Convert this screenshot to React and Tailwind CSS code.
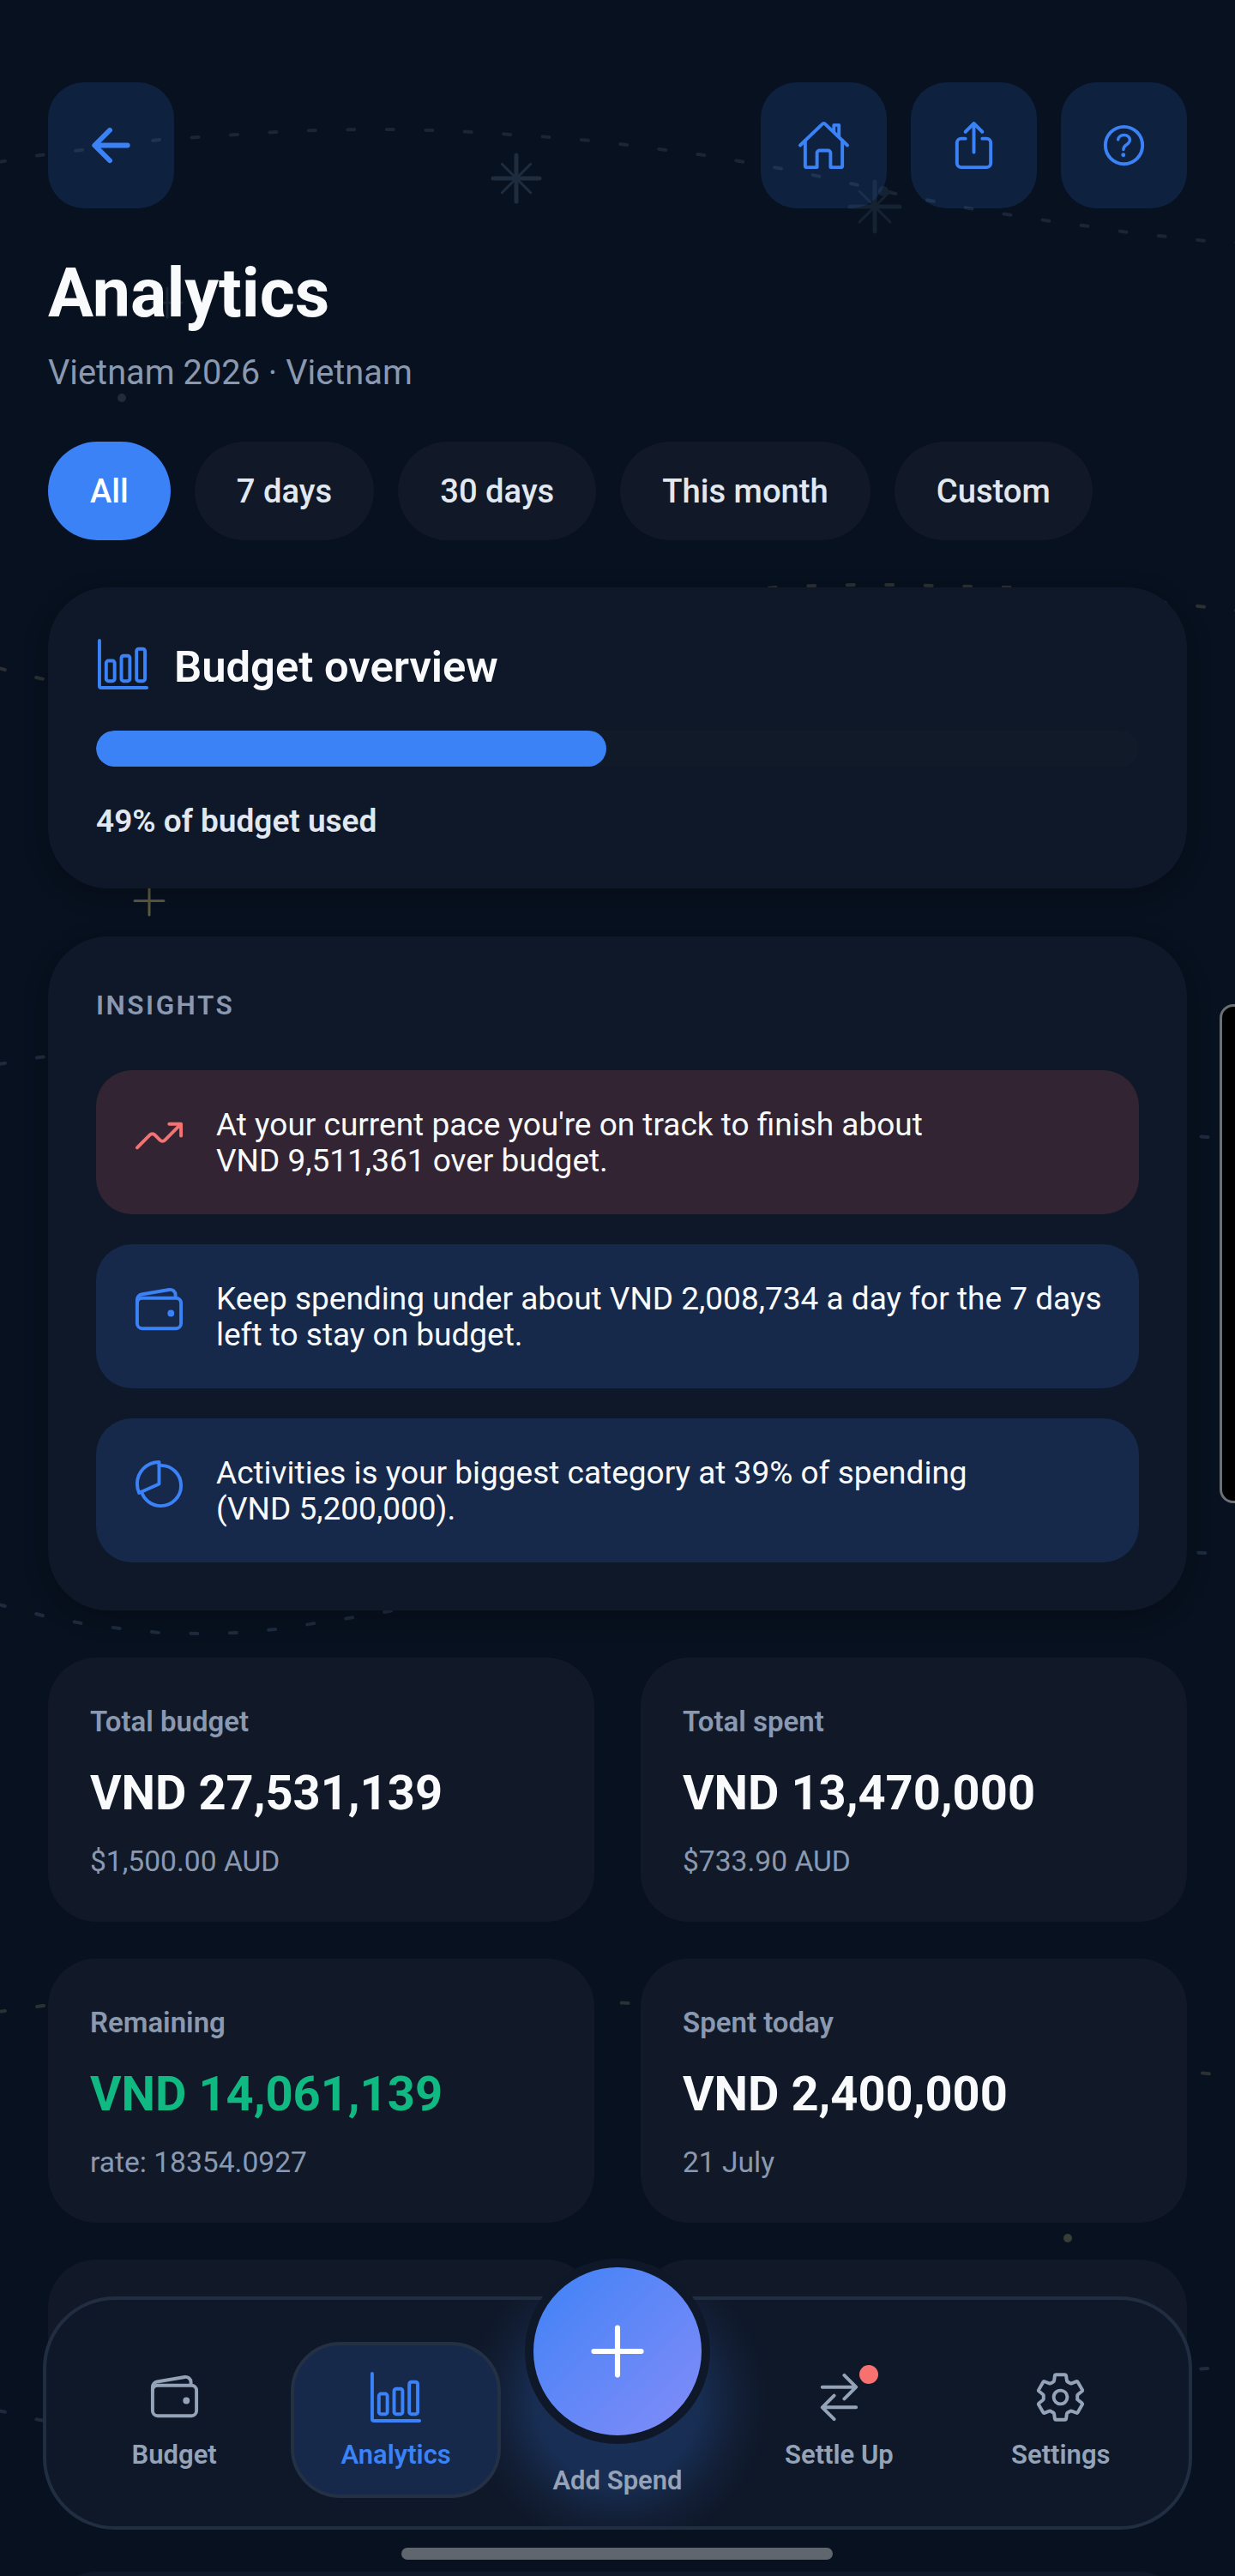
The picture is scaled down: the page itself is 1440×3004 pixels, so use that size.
import {
  IoAdd,
  IoArrowBack,
  IoBarChartOutline,
  IoHelpCircleOutline,
  IoHomeOutline,
  IoPieChartOutline,
  IoSettingsOutline,
  IoShareOutline,
  IoSwapHorizontalOutline,
  IoTrendingUpOutline,
  IoWalletOutline,
} from 'react-icons/io5'

const RANGES = ['All', '7 days', '30 days', 'This month', 'Custom']

const INSIGHTS = [
  {
    icon: IoTrendingUpOutline,
    tone: 'bg-[#322433]',
    iconColor: 'text-[#f87171]',
    text: "At your current pace you're on track to finish about VND\u00A09,511,361 over budget.",
  },
  {
    icon: IoWalletOutline,
    tone: 'bg-[#16294b]',
    iconColor: 'text-[#3b82f6]',
    text: 'Keep spending under about VND\u00A02,008,734 a day for the 7 days left to stay on budget.',
  },
  {
    icon: IoPieChartOutline,
    tone: 'bg-[#16294b]',
    iconColor: 'text-[#3b82f6]',
    text: 'Activities is your biggest category at 39% of spending (VND\u00A05,200,000).',
  },
]

const STATS = [
  { label: 'Total budget', value: 'VND 27,531,139', sub: '$1,500.00 AUD' },
  { label: 'Total spent', value: 'VND 13,470,000', sub: '$733.90 AUD' },
  { label: 'Remaining', value: 'VND 14,061,139', sub: 'rate: 18354.0927', good: true },
  { label: 'Spent today', value: 'VND 2,400,000', sub: '21 July' },
]

const WAVES = [
  { color: '#1a2636', points: '-2,189 46,181 95,175 140,169 185,163 230,160 275,157 321,154 367,152 413,151 459,151 505,152 551,154 597,157 642,160 688,164 731,169 777,175 822,181 868,189 913,197 957,206 1001,216 1045,226 1090,235 1135,244 1180,251 1225,258 1270,264 1315,271 1360,276 1407,281 1442,283' },
  { color: '#2b3032', points: '-2,779 46,791 95,800 300,780 600,720 904,685 950,683 996,682 1042,682 1088,683 1133,684 1179,685 1270,692 1360,703 1407,708 1442,712' },
  { color: '#1e2b3f', points: '-2,1241 46,1233 300,1210 800,1260 1200,1310 1407,1326 1442,1328' },
  { color: '#1e2b3f', points: '-2,1871 50,1884 95,1893 140,1899 186,1904 232,1905 277,1904 322,1900 367,1893 413,1886 459,1878 700,1830 1100,1800 1407,1811 1442,1813' },
  { color: '#2b3032', points: '-2,2346 50,2339 400,2320 733,2336 1100,2390 1407,2418 1442,2421' },
  { color: '#1e2b3f', points: '-2,2811 46,2822 400,2860 900,2800 1407,2762 1442,2760' },
]

function Star({ x, y, r, color }) {
  const d = r * 0.62
  return (
    <g stroke={color} strokeLinecap="round">
      <path d={`M${x} ${y - r}V${y + r}M${x - r} ${y}H${x + r}`} strokeWidth="5" />
      <path d={`M${x - d} ${y - d}L${x + d} ${y + d}M${x - d} ${y + d}L${x + d} ${y - d}`} strokeWidth="3" />
    </g>
  )
}

function Backdrop() {
  return (
    <svg className="absolute left-0 top-0 z-0" width="1440" height="3004" viewBox="0 0 1440 3004" fill="none">
      {WAVES.map(w => (
        <polyline key={w.points} points={w.points} stroke={w.color} strokeWidth="4" strokeLinecap="round" strokeDasharray="8 37.5" />
      ))}
      <Star x={602} y={208} r={27} color="#1e2c3e" />
      <Star x={1020} y={241} r={29} color="#152231" />
      <circle cx="1030" cy="223" r="6" fill="#152231" />
      <path d="M195 336v34M178 353h34" stroke="#1a2636" strokeWidth="3" strokeLinecap="round" />
      <path d="M174 1034v33M157 1050.5h34" stroke="#5c5a40" strokeWidth="3" strokeLinecap="round" />
      <circle cx="142" cy="464" r="5" fill="#1e2c3e" />
      <circle cx="1245" cy="2610" r="5" fill="#3a3d36" />
    </svg>
  )
}

function HeaderButton({ icon: Icon }) {
  return (
    <button className="flex h-[147px] w-[147px] items-center justify-center rounded-[42px] bg-[#3b82f6]/15 text-[#3b82f6]">
      <Icon size={63} />
    </button>
  )
}

function StatCard({ label, value, sub, good }) {
  return (
    <div className="h-[308px] rounded-[56px] bg-[#111928] px-[49px] pt-[55px]">
      <div className="text-[33px] font-semibold leading-[40px] text-[#8a99b0]">{label}</div>
      <div className={`mt-[30px] text-[56px] font-bold leading-[66px] ${good ? 'text-[#10b981]' : 'text-[#f8fafc]'}`}>
        {value}
      </div>
      <div className="mt-[27px] text-[33.6px] leading-[40px] text-[#8a99b0]">{sub}</div>
    </div>
  )
}

function NavItem({ icon: Icon, label, active, dot }) {
  return (
    <div
      className={`flex h-[182px] w-[245px] flex-col items-center justify-center gap-[17px] rounded-[58px] border-[4px] ${
        active ? 'border-[#243044] bg-[#16294b] text-[#3b82f6]' : 'border-transparent text-[#94a3b8]'
      }`}
    >
      <div className="relative">
        <Icon size={63} />
        {dot && <span className="absolute right-[-14px] top-[-6px] h-[22px] w-[22px] rounded-full bg-[#f87171]" />}
      </div>
      <span className="text-[31px] font-semibold leading-[37px]">{label}</span>
    </div>
  )
}

function BottomNav() {
  return (
    <nav className="absolute bottom-[54px] left-[50px] z-20 h-[272px] w-[1340px] rounded-[84px] border-[4px] border-[#212d40] bg-[#0f1829]">
      <div className="absolute inset-0 rounded-[80px] bg-[radial-gradient(circle_175px_at_50%_45%,rgba(59,130,246,0.24)_0%,rgba(59,130,246,0.2)_55%,rgba(59,130,246,0.06)_80%,rgba(59,130,246,0)_100%)]" />
      <div className="relative grid h-full grid-cols-5 items-end justify-items-center px-[20px] pb-[33px]">
        <NavItem icon={IoWalletOutline} label="Budget" />
        <NavItem icon={IoBarChartOutline} label="Analytics" active />
        <div className="flex h-[182px] flex-col justify-end pb-[2px]">
          <span className="text-[31px] font-semibold leading-[37px] text-[#94a3b8]">Add Spend</span>
        </div>
        <NavItem icon={IoSwapHorizontalOutline} label="Settle Up" dot />
        <NavItem icon={IoSettingsOutline} label="Settings" />
      </div>
      <button className="absolute left-1/2 top-[-48px] flex h-[216px] w-[216px] -translate-x-1/2 items-center justify-center rounded-full border-[10px] border-[#0f1829] bg-gradient-to-br from-[#3b82f6] to-[#818cf8] text-white">
        <IoAdd size={98} />
      </button>
    </nav>
  )
}

export default function App() {
  return (
    <div className="relative h-[3004px] w-[1440px] overflow-hidden bg-[#07111f] font-['Roboto',sans-serif]">
      <Backdrop />

      <main className="relative z-10 flex flex-col px-[56px] pt-[96px]">
        <div className="flex items-center justify-between">
          <HeaderButton icon={IoArrowBack} />
          <div className="flex gap-[28px]">
            <HeaderButton icon={IoHomeOutline} />
            <HeaderButton icon={IoShareOutline} />
            <HeaderButton icon={IoHelpCircleOutline} />
          </div>
        </div>

        <h1 className="mt-[52px] text-[79px] font-bold leading-[94px] text-[#f8fafc]">Analytics</h1>
        <p className="mt-[21px] text-[39.8px] leading-[49px] text-[#8a99b0]">Vietnam 2026 · Vietnam</p>

        <div className="mt-[56px] flex gap-[28px]">
          {RANGES.map((r, i) => (
            <button
              key={r}
              className={`h-[115px] rounded-full px-[49px] pt-[2px] text-[38.2px] font-medium ${
                i === 0 ? 'bg-[#3b82f6] text-white' : 'bg-[#111827] text-[#e2e8f0]'
              }`}
            >
              {r}
            </button>
          ))}
        </div>

        <section className="mt-[55px] rounded-[70px] bg-[#0f1829] px-[56px] py-[58px] shadow-[0_8px_28px_rgba(0,0,0,0.25)]">
          <div className="flex items-center gap-[28px]">
            <IoBarChartOutline size={63} className="text-[#3b82f6]" />
            <h2 className="pt-[6px] text-[50.75px] font-semibold leading-[57px] text-[#f8fafc]">Budget overview</h2>
          </div>
          <div className="mt-[46px] h-[42px] overflow-hidden rounded-full bg-[#101a29]">
            <div className="h-full rounded-full bg-[#3b82f6]" style={{ width: '48.9%' }} />
          </div>
          <p className="mt-[43px] text-[37px] font-semibold leading-[41px] text-[#e2e8f0]">49% of budget used</p>
        </section>

        <section className="mt-[56px] rounded-[70px] bg-[#0f1829] px-[56px] pb-[56px] pt-[62px] shadow-[0_8px_28px_rgba(0,0,0,0.25)]">
          <h3 className="text-[31.5px] font-semibold uppercase leading-[37px] tracking-[2.5px] text-[#8a99b0]">Insights</h3>
          <div className="mt-[57px] flex flex-col gap-[35px]">
            {INSIGHTS.map(({ icon: Icon, tone, iconColor, text }) => (
              <div key={text} className={`flex h-[168px] items-start gap-[35px] rounded-[42px] py-[42px] pl-[42px] pr-[30px] ${tone}`}>
                <Icon size={63} className={`mt-[3px] shrink-0 ${iconColor}`} />
                <p className="mt-[1px] text-[37px] leading-[42px] text-[#f8fafc]">{text}</p>
              </div>
            ))}
          </div>
        </section>

        <div className="mt-[55px] grid grid-cols-2 gap-x-[54px] gap-y-[43px]">
          {STATS.map(s => (
            <StatCard key={s.label} {...s} />
          ))}
          <div className="h-[300px] rounded-[56px] bg-[#111928]" />
          <div className="h-[300px] rounded-[56px] bg-[#111928]" />
          <div className="col-span-2 mt-[21px] h-[300px] rounded-[56px] bg-[#0f1829]" />
        </div>
      </main>

      <BottomNav />

      <div className="absolute bottom-[19px] left-[468px] z-20 h-[14px] w-[503px] rounded-full bg-[#5f666e]" />
      <div className="absolute left-[1422px] top-[1171px] z-20 h-[582px] w-[40px] rounded-l-[16px] border-[3px] border-[#6b7075] bg-black" />
    </div>
  )
}
